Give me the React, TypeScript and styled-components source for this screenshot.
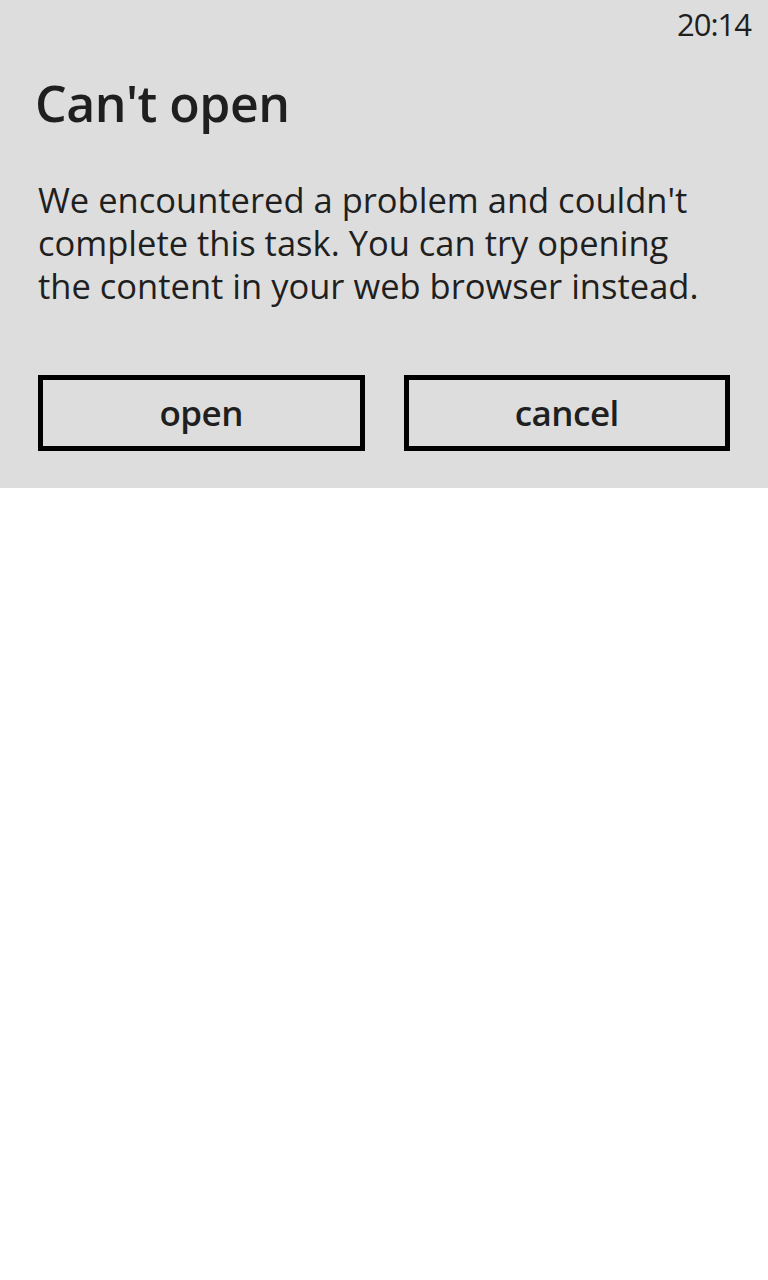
import React from "react";
import styled, { createGlobalStyle } from "styled-components";

const Global = createGlobalStyle`
  html, body { margin: 0; padding: 0; background: #ffffff; }
  body { font-family: "Open Sans", "Noto Sans", sans-serif; color: #1f1f1f; }
`;

const Panel = styled.div`
  background: #dddddd;
  height: 488px;
  box-sizing: border-box;
  padding: 0 38px 0 38px;
  display: flex;
  flex-direction: column;
`;

const StatusBar = styled.div`
  display: flex;
  justify-content: flex-end;
  height: 48px;
  margin-right: -21px;
  align-items: center;
`;

const Time = styled.span`
  font-size: 31px;
  font-weight: 400;
  letter-spacing: -1px;
  line-height: 1;
  margin-top: 1px;
`;

const Title = styled.h1`
  margin: 25px 0 0 -3px;
  font-size: 50px;
  font-weight: 600;
  line-height: 60px;
  letter-spacing: -0.5px;
`;

const Message = styled.p`
  margin: 45px 0 0 0;
  font-size: 34.5px;
  line-height: 43px;
  max-width: 662px;
`;

const Buttons = styled.div`
  display: grid;
  grid-template-columns: 1fr 1fr;
  gap: 39px;
  margin-top: 68px;
  width: 692px;
`;

const Button = styled.button`
  height: 76px;
  box-sizing: border-box;
  border: 5px solid #000;
  background: transparent;
  font-family: inherit;
  color: #1f1f1f;
  font-size: 35px;
  font-weight: 600;
  letter-spacing: -0.5px;
  padding: 0 0 1px 0;
  cursor: pointer;
`;

export default function App() {
  return (
    <>
      <Global />
      <Panel>
        <StatusBar>
          <Time>20:14</Time>
        </StatusBar>
        <Title>Can't open</Title>
        <Message>
          We encountered a problem and couldn't complete this task. You can try
          opening the content in your web browser instead.
        </Message>
        <Buttons>
          <Button>open</Button>
          <Button>cancel</Button>
        </Buttons>
      </Panel>
    </>
  );
}
